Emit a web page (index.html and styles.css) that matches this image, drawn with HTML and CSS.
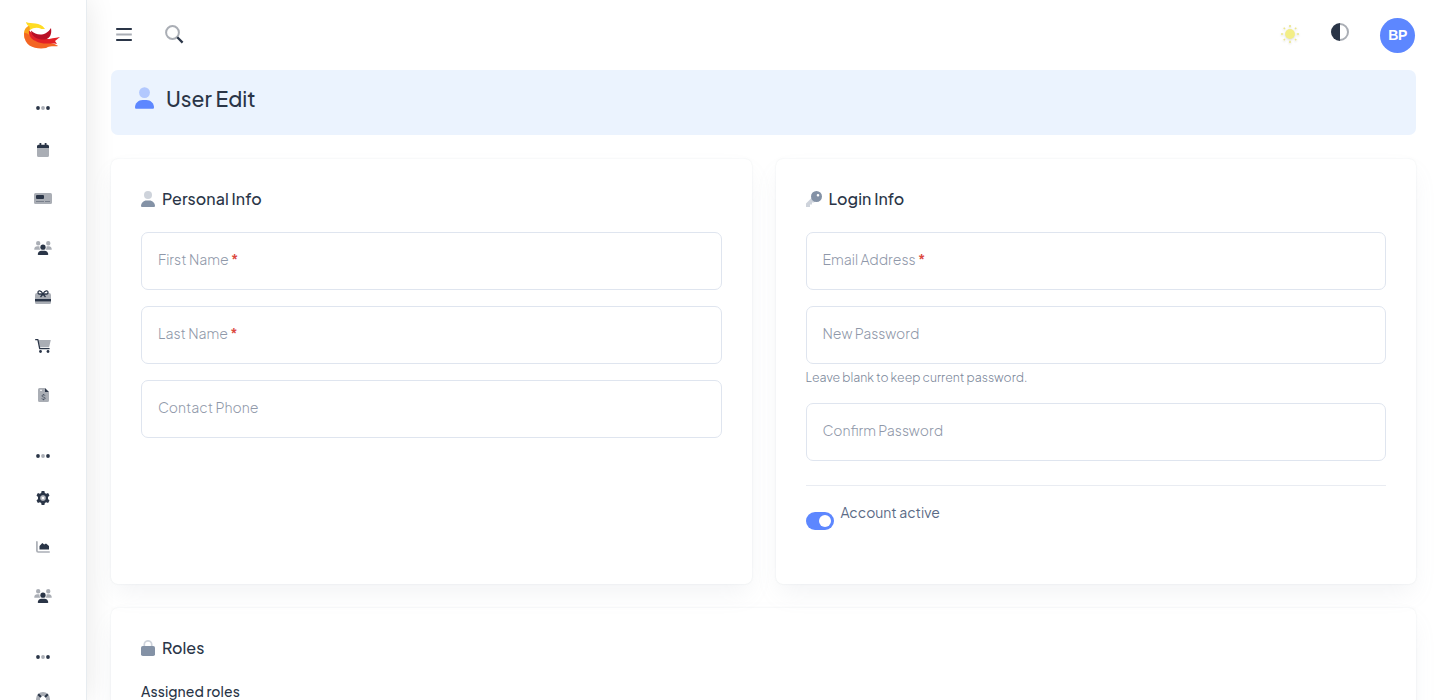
FILE: index.html
```html
<!DOCTYPE html>
<html lang="en">
<head>
    <meta charset="UTF-8">
    <meta name="viewport" content="width=device-width, initial-scale=1.0">
    <title>User Edit</title>
    <link rel="stylesheet" href="styles.css">
</head>
<body>
    <!-- shared icons -->
    <svg class="icon-defs" aria-hidden="true">
        <symbol id="i-dots" viewBox="0 0 14 4">
            <circle cx="2" cy="2" r="1.9"/><circle cx="7" cy="2" r="1.9" opacity=".4"/><circle cx="12" cy="2" r="1.9"/>
        </symbol>
        <symbol id="i-user" viewBox="0 0 448 512">
            <circle cx="224" cy="128" r="128" opacity=".4"/>
            <path d="M178 304h92c98 0 178 80 178 178 0 17-13 30-30 30H30c-17 0-30-13-30-30 0-98 80-178 178-178z"/>
        </symbol>
        <symbol id="i-users" viewBox="0 0 640 512">
            <path opacity=".4" d="M144 0a80 80 0 1 1 0 160 80 80 0 1 1 0-160zM512 0a80 80 0 1 1 0 160 80 80 0 1 1 0-160zM0 299c0-59 48-107 107-107h42c16 0 31 4 45 10-1 7-2 15-2 22 0 38 17 72 43 96H21c-12 0-21-10-21-21zM405 320c27-24 43-58 43-96 0-7-1-15-2-22 14-6 29-10 45-10h42c59 0 107 48 107 107 0 11-10 21-21 21z"/>
            <circle cx="320" cy="224" r="96"/>
            <path d="M128 485c0-73 60-133 133-133h118c73 0 133 60 133 133 0 15-12 27-27 27H155c-15 0-27-12-27-27z"/>
        </symbol>
    </svg>

    <div class="layout">
        <aside class="sidebar">
            <a class="logo" href="#">
                <svg width="36" height="27" viewBox="0 0 36 27">
                    <path fill="#f9a01b" d="M5 3.500C-.5 6.500-1 12 1 17l6-2C4.500 11 5 7 8 5z"/>
                    <path fill="#ffdc23" d="M2 0c5 2.500 14-1 19 7h-3.500c-4-2-8-1.500-11.500 1L5.500 4.500C3.500 3.500 2.500 2 2 0z"/>
                    <path fill="#f36523" d="M.2 11c1 0 3 0 5 2 4 5 9 7 14 7s10 1 15 4c-4 .5-9-.5-12 2-10 1.500-23-1-22-15z"/>
                    <path fill="#e32026" d="M5 8.500c3 2 7 7 14 8.500 6 .5 11-1 17-2l-5 4 2 3c-6-1.500-10 .5-16-1-8-2-13-6-12-12.500z"/>
                    <path fill="#b80f24" d="M7 8.500c6 6 15 5.500 20-2.500 1 6-1 10.500-6 11.500-7 .5-14-3-14-9z"/>
                </svg>
            </a>
            <div class="nav-cap"><svg width="14" height="4"><use href="#i-dots"/></svg></div>
            <a class="nav-item" href="#"><svg width="12" height="14" viewBox="0 0 12 14">
                <path opacity=".4" d="M0 5h12v7.500a1.500 1.500 0 0 1-1.500 1.500h-9A1.500 1.500 0 0 1 0 12.500z"/>
                <path d="M2.500 0h1.800v1.800h3.400V0h1.800v1.800h1A1.500 1.500 0 0 1 12 3.300V5H0V3.300a1.500 1.500 0 0 1 1.500-1.500h1z"/></svg></a>
            <a class="nav-item" href="#"><svg width="18" height="11" viewBox="0 0 18 11">
                <rect width="18" height="11" rx="1.500" opacity=".4"/><rect x="2" y="2" width="8" height="4" rx="1"/>
                <path opacity=".5" d="M2 8h8v.8H2zM11 8h5v.8h-5z"/></svg></a>
            <a class="nav-item" href="#"><svg width="18" height="14"><use href="#i-users"/></svg></a>
            <a class="nav-item" href="#"><svg width="16" height="14" viewBox="0 0 16 14">
                <path opacity=".4" d="M2 3h12a2 2 0 0 1 2 2v7.500a1.500 1.500 0 0 1-1.500 1.500h-13A1.500 1.500 0 0 1 0 12.500V5a2 2 0 0 1 2-2z"/>
                <path d="M0 9h16v2.400H0z"/>
                <path fill="none" stroke="currentColor" stroke-width="1.300" d="M8 4C6 0 3 0 3 2.500S6 4 8 4s5 1 5-1.500S10 0 8 4zm0 0L5.500 7M8 4l2.500 3"/></svg></a>
            <a class="nav-item" href="#"><svg width="16" height="14" viewBox="0 0 16 14">
                <path opacity=".4" d="M3.500 1h12.300l-1.700 7.300H5z"/>
                <path fill="none" stroke="currentColor" stroke-width="1.300" stroke-linecap="round" stroke-linejoin="round" d="M.7.7h2.200L4.700 9.700h9.400"/>
                <circle cx="5.500" cy="12.500" r="1.400"/><circle cx="13" cy="12.500" r="1.400"/></svg></a>
            <a class="nav-item" href="#"><svg width="11" height="14" viewBox="0 0 11 14">
                <path opacity=".4" fill-rule="evenodd" d="M1.500 0H7v4h4v8.500A1.500 1.500 0 0 1 9.500 14h-8A1.500 1.500 0 0 1 0 12.500v-11A1.500 1.500 0 0 1 1.500 0zm.5 1.800v1h2v-1z"/>
                <path d="M7 0l4 4H7z"/>
                <path fill="none" stroke="currentColor" opacity=".6" d="M7.300 7.600C6.500 6.700 3.700 6.700 3.800 8s3.500.9 3.500 2.200-2.800 1.300-3.700.4M5.500 6v1M5.500 11v1.200"/></svg></a>
            <div class="nav-cap"><svg width="14" height="4"><use href="#i-dots"/></svg></div>
            <a class="nav-item" href="#"><svg width="14" height="14" viewBox="0 0 14 14">
                <path fill-rule="evenodd" d="M5.600 0h2.800l.4 1.900 1.400.8 1.900-.6 1.400 2.400-1.500 1.400v2.200l1.500 1.400-1.400 2.400-1.900-.6-1.400.8-.4 1.900H5.600l-.4-1.900-1.400-.8-1.900.6L.5 9.500 2 8.100V5.900L.5 4.500l1.400-2.400 1.900.6 1.400-.8zM7 4.300a2.700 2.700 0 1 0 0 5.400 2.700 2.700 0 0 0 0-5.400z"/>
                <circle cx="7" cy="7" r="2" fill="none" stroke="currentColor" stroke-width="1.400" opacity=".35"/></svg></a>
            <a class="nav-item" href="#"><svg width="14" height="12" viewBox="0 0 14 12">
                <path fill="none" stroke="currentColor" stroke-width="1.700" opacity=".4" stroke-linecap="round" d="M.9.900v8.800q0 1.300 1.300 1.300h11"/>
                <path d="M3.500 8.500V5l2.800-3 1.900 1.500L10 2.500 13 5v3.500z"/></svg></a>
            <a class="nav-item" href="#"><svg width="18" height="14"><use href="#i-users"/></svg></a>
            <div class="nav-cap"><svg width="14" height="4"><use href="#i-dots"/></svg></div>
            <a class="nav-item" href="#"><svg width="14" height="14" viewBox="0 0 14 14">
                <circle cx="7" cy="7" r="5" fill="none" stroke="currentColor" stroke-width="4" opacity=".4"/>
                <path fill="none" stroke="currentColor" stroke-width="2" d="M2.200 2.200l2.800 2.800M11.800 2.200L9 5M2.200 11.800L5 9M11.800 11.800L9 9"/></svg></a>
        </aside>

        <div class="page">
            <header class="topbar">
                <div class="topbar-left">
                    <svg width="16" height="13" viewBox="0 0 16 13"><path d="M.2 0h15.600v2H.2zM.2 11h15.600v2H.2z"/><path opacity=".4" d="M.2 5.500h15.600v2H.2z"/></svg>
                    <svg width="19" height="19" viewBox="0 0 19 19">
                        <circle cx="7.500" cy="7.500" r="6.400" fill="none" stroke="currentColor" stroke-width="2" opacity=".4"/>
                        <path fill="none" stroke="currentColor" stroke-width="2.300" d="M12.300 12.300l5.300 5.300"/></svg>
                </div>
                <div class="topbar-right">
                    <svg class="sun" width="20" height="20" viewBox="0 0 20 20">
                        <circle cx="10" cy="10" r="4.900"/>
                        <path d="M10 1v2.200M10 16.800V19M1 10h2.200M16.800 10H19M3.700 3.700L5 5M15 15l1.300 1.300M3.700 16.300L5 15M15 5l1.300-1.300"/></svg>
                    <svg class="contrast" width="18" height="18" viewBox="0 0 18 18">
                        <path d="M9 0v18A9 9 0 0 1 9 0z"/>
                        <path opacity=".4" d="M9 0a9 9 0 0 1 0 18v-2A7 7 0 0 0 9 2z"/></svg>
                    <span class="avatar">BP</span>
                </div>
            </header>

            <main class="content">
                <div class="banner">
                    <svg width="19" height="22"><use href="#i-user"/></svg>
                    <h1>User Edit</h1>
                </div>

                <div class="row">
                    <section class="card">
                        <h2 class="card-title"><svg width="14" height="16"><use href="#i-user"/></svg><span>Personal Info</span></h2>
                        <div class="field">First Name <b>*</b></div>
                        <div class="field">Last Name <b>*</b></div>
                        <div class="field">Contact Phone</div>
                    </section>

                    <section class="card">
                        <h2 class="card-title"><svg width="16" height="16" viewBox="0 0 16 16">
                            <path opacity=".4" d="M6 6.500L9.500 10 8 11.500H6v2H4V16H0v-3.500z"/>
                            <path fill-rule="evenodd" d="M10.500 0a5.500 5.500 0 1 1 0 11 5.500 5.500 0 0 1 0-11zM12 3a1.300 1.300 0 1 0 0 2.600A1.300 1.300 0 0 0 12 3z"/></svg><span>Login Info</span></h2>
                        <div class="field">Email Address <b>*</b></div>
                        <div class="field">New Password</div>
                        <p class="help">Leave blank to keep current password.</p>
                        <div class="field">Confirm Password</div>
                        <hr>
                        <div class="switch-row">
                            <span class="switch"></span>
                            <span class="switch-label">Account active</span>
                        </div>
                    </section>
                </div>

                <section class="card">
                    <h2 class="card-title"><svg width="14" height="16" viewBox="0 0 14 16">
                        <path fill="none" stroke="currentColor" stroke-width="1.700" opacity=".4" d="M3.300 6V4.500a3.700 3.700 0 0 1 7.400 0V6"/>
                        <rect y="6" width="14" height="10" rx="1.800"/></svg><span>Roles</span></h2>
                    <h3 class="sub-title">Assigned roles</h3>
                </section>
            </main>
        </div>
    </div>
</body>
</html>
```
FILE: styles.css
```css
* {
    margin: 0;
    padding: 0;
    box-sizing: border-box;
}

body {
    height: 700px;
    overflow: hidden;
    background: #fff;
    color: #2a3547;
    font-family: "Plus Jakarta Sans", Inter, "Noto Sans", sans-serif;
    font-size: 14px;
}

svg {
    display: block;
    flex: none;
    fill: currentColor;
}

.icon-defs {
    display: none;
}

.layout {
    display: flex;
    height: 700px;
    overflow: hidden;
}

/* sidebar */
.sidebar {
    flex: none;
    width: 87px;
    height: 700px;
    overflow: hidden;
    background: #fff;
    border-right: 1px solid #e7ecf0;
    box-shadow: 0 0 30px rgba(0, 0, 0, 0.1);
}

.logo {
    display: flex;
    align-items: center;
    height: 71px;
    padding-left: 24px;
}

.nav-cap {
    display: flex;
    justify-content: center;
    height: 54px;
    padding-top: 35px;
}

.nav-item {
    display: flex;
    align-items: center;
    justify-content: center;
    height: 49px;
    color: inherit;
}

/* top bar */
.page {
    flex: 1;
    min-width: 0;
    padding: 0 24px;
}

.topbar {
    display: flex;
    align-items: center;
    justify-content: space-between;
    height: 70px;
    padding: 0 1px 0 5px;
}

.topbar-left {
    display: flex;
    align-items: center;
    gap: 33px;
    margin-bottom: 1px;
}

.topbar-right {
    display: flex;
    align-items: center;
    gap: 31px;
}

.sun {
    margin-bottom: 3px;
    fill: #f3ee86;
    stroke: #ece78c;
    stroke-width: 1.6;
    filter: drop-shadow(0 1px 1px rgba(0, 0, 0, 0.15));
}

.sun circle {
    stroke: none;
}

.contrast {
    margin-bottom: 6px;
}

.avatar {
    width: 35px;
    height: 35px;
    border-radius: 50%;
    background: #5d87ff;
    color: #fff;
    font-family: "Liberation Sans", Arial, sans-serif;
    font-size: 14px;
    font-weight: 700;
    line-height: 34px;
    letter-spacing: -0.5px;
    text-align: center;
}

/* content */
.banner {
    display: flex;
    gap: 12px;
    height: 65px;
    margin-bottom: 24px;
    padding: 17px 24px;
    border-radius: 7px;
    background: #ebf3fe;
    color: #5d87ff;
}

.banner h1 {
    color: #2a3547;
    font-size: 21px;
    font-weight: 500;
    line-height: 23px;
}

.row {
    display: flex;
    gap: 24px;
    height: 425px;
    margin-bottom: 24px;
}

.row .card {
    flex: 1;
}

.card {
    padding: 30px;
    border-radius: 7px;
    background: #fff;
    box-shadow: 0 0 2px rgba(145, 158, 171, 0.2), 0 12px 24px -4px rgba(145, 158, 171, 0.12);
}

.card-title {
    display: flex;
    align-items: center;
    gap: 7px;
    height: 20px;
    margin-bottom: 23px;
    color: #8492a6;
    font-size: 16px;
    font-weight: 500;
    letter-spacing: 0.05px;
}

.card-title span {
    padding-bottom: 2px;
    color: #2a3547;
}

.field {
    height: 58px;
    margin-bottom: 16px;
    padding: 0 16px;
    border: 1px solid #dfe5ef;
    border-radius: 7px;
    color: #8f98a9;
    font-size: 14px;
    font-weight: 300;
    line-height: 52px;
}

.field b {
    color: #dc4a3f;
    font-weight: 600;
}

.help {
    height: 23px;
    margin-top: -10px;
    color: #7a8699;
    font-size: 12.25px;
    font-weight: 300;
    line-height: 15px;
}

.help + .field {
    margin-top: 10px;
}

hr {
    margin-top: 24px;
    border: 0;
    border-top: 1px solid #e9ecf2;
}

.switch-row {
    display: flex;
    align-items: flex-start;
    gap: 7px;
    padding-top: 17px;
}

.switch {
    width: 28px;
    height: 18px;
    margin-top: 9px;
    padding: 3px;
    border-radius: 9px;
    background: #5d87ff;
}

.switch::after {
    content: "";
    display: block;
    width: 12px;
    height: 12px;
    margin-left: auto;
    border-radius: 50%;
    background: #fff;
}

.switch-label {
    color: #5a6a85;
    line-height: 18px;
}

.sub-title {
    font-size: 14px;
    font-weight: 500;
    line-height: 20px;
    letter-spacing: 0.07px;
}
```
